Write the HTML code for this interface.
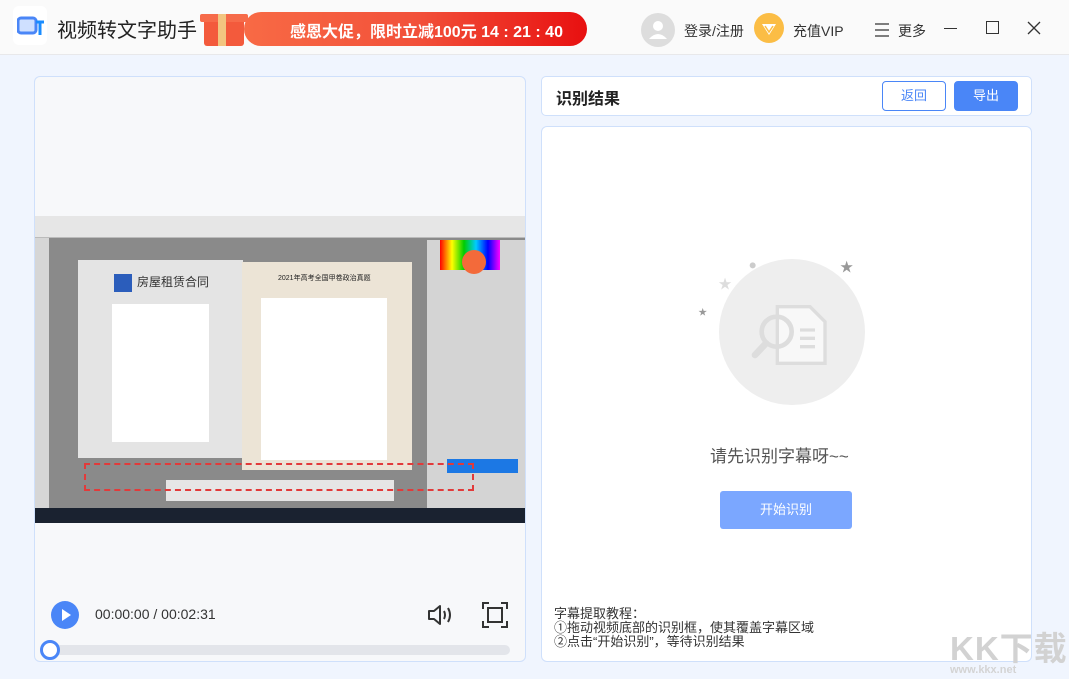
<!DOCTYPE html>
<html><head><meta charset="utf-8"><style>
*{margin:0;padding:0;box-sizing:border-box}
body{width:1069px;height:679px;overflow:hidden;background:#f0f5fe;font-family:"Liberation Sans","Noto Sans CJK SC",sans-serif;position:relative;color:#333}
.a{position:absolute}
</style></head><body>
<!-- top bar -->
<div class="a" style="left:0;top:0;width:1069px;height:55px;background:#fafafa;border-bottom:1px solid #e8e8ea"></div>
<div class="a" style="left:13px;top:6px;width:34px;height:39px;background:#fff;border-radius:6px"></div>
<svg class="a" style="left:17px;top:16px" width="28" height="20" viewBox="0 0 28 20"><rect x="1" y="2" width="18" height="15" rx="3" fill="#cfe0ff" stroke="#4a86f7" stroke-width="3"/><path d="M19 6 L27 6 M23 6 L23 19" stroke="#1a8cff" stroke-width="3"/></svg>
<div class="a" style="left:57px;top:14px;font-size:20px;color:#222">视频转文字助手</div>
<div class="a" style="left:244px;top:12px;width:343px;height:34px;border-radius:17px;background:linear-gradient(90deg,#f86a45,#f2513a 50%,#e81010)"></div>
<div class="a" style="left:204px;top:16px;width:40px;height:30px;background:#f35a3c;border-radius:3px"></div>
<div class="a" style="left:200px;top:14px;width:48px;height:8px;background:#f66b4a;border-radius:2px"></div>
<div class="a" style="left:218px;top:14px;width:8px;height:32px;background:#f2c580"></div>
<div class="a" style="left:290px;top:18px;font-size:16px;font-weight:bold;color:#fff">感恩大促，限时立减100元 14 : 21 : 40</div>
<div class="a" style="left:641px;top:13px;width:34px;height:34px;border-radius:50%;background:#ddd"></div>
<svg class="a" style="left:641px;top:13px" width="34" height="34"><circle cx="17" cy="13" r="5" fill="#fff"/><path d="M8 26 Q17 16 26 26 Z" fill="#fff"/></svg>
<div class="a" style="left:684px;top:21px;font-size:14px">登录/注册</div>
<div class="a" style="left:754px;top:13px;width:30px;height:30px;border-radius:50%;background:#fbbd45"></div>
<svg class="a" style="left:754px;top:13px" width="30" height="30"><path d="M8 11 L22 11 L15 22 Z" fill="#fff"/><path d="M11 13 L15 19 L19 13" fill="none" stroke="#fbbd45" stroke-width="1.5"/></svg>
<div class="a" style="left:793px;top:21px;font-size:14px">充值VIP</div>
<svg class="a" style="left:874px;top:22px" width="16" height="16"><path d="M1 2H15M1 8H15M1 14H15" stroke="#333" stroke-width="1.2"/></svg>
<div class="a" style="left:898px;top:21px;font-size:14px">更多</div>
<div class="a" style="left:944px;top:28px;width:13px;height:1px;background:#333"></div>
<div class="a" style="left:986px;top:21px;width:13px;height:13px;border:1.5px solid #333"></div>
<svg class="a" style="left:1027px;top:21px" width="14" height="14"><path d="M1 1L13 13M13 1L1 13" stroke="#333" stroke-width="1.3"/></svg>
<!-- left panel -->
<div class="a" style="left:34px;top:76px;width:492px;height:586px;background:#f7f8fa;border:1px solid #cfe0fb;border-radius:6px"></div>
<div class="a" style="left:35px;top:216px;width:490px;height:307px;background:#8a8a8a"></div>
<div class="a" style="left:35px;top:216px;width:490px;height:22px;background:#e6e6e6;border-bottom:1px solid #bbb"></div>
<div class="a" style="left:35px;top:238px;width:14px;height:270px;background:#d6d6d6"></div>
<div class="a" style="left:78px;top:260px;width:165px;height:198px;background:#e4e4e4"></div>
<div class="a" style="left:114px;top:274px;width:18px;height:18px;background:#2b5dbb"></div>
<div class="a" style="left:137px;top:273px;font-size:12px;color:#333">房屋租赁合同</div>
<div class="a" style="left:112px;top:304px;width:97px;height:138px;background:#fff"></div>
<div class="a" style="left:242px;top:262px;width:170px;height:208px;background:#ece4d6"></div>
<div class="a" style="left:278px;top:273px;font-size:7px;color:#222">2021年高考全国甲卷政治真题</div>
<div class="a" style="left:261px;top:298px;width:126px;height:162px;background:#fff"></div>
<div class="a" style="left:427px;top:240px;width:98px;height:268px;background:#d4d4d4"></div>
<div class="a" style="left:440px;top:240px;width:60px;height:30px;background:linear-gradient(90deg,#f00,#ff0,#0c0,#0cf,#00f,#f0f)"></div>
<div class="a" style="left:462px;top:250px;width:24px;height:24px;border-radius:50%;background:#f36a3a"></div>
<div class="a" style="left:447px;top:459px;width:71px;height:14px;background:#1c78e4"></div>
<div class="a" style="left:166px;top:480px;width:228px;height:21px;background:#e6e6e6"></div>
<div class="a" style="left:84px;top:463px;width:390px;height:28px;border:2px dashed #e23a3a"></div>
<div class="a" style="left:35px;top:508px;width:490px;height:15px;background:#1a2230"></div>
<div class="a" style="left:51px;top:601px;width:28px;height:28px;border-radius:50%;background:#4a86f7"></div>
<svg class="a" style="left:51px;top:601px" width="28" height="28"><path d="M11 8L20 14L11 20Z" fill="#fff"/></svg>
<div class="a" style="left:95px;top:606px;font-size:14px;color:#333">00:00:00 / 00:02:31</div>
<svg class="a" style="left:426px;top:603px" width="28" height="24" viewBox="0 0 28 24"><path d="M3 8H8L14 3V21L8 16H3Z" fill="none" stroke="#333" stroke-width="2" stroke-linejoin="round"/><path d="M18 8Q20 12 18 16M22 5Q26 12 22 19" fill="none" stroke="#333" stroke-width="2"/></svg>
<svg class="a" style="left:482px;top:602px" width="26" height="26"><path d="M1 7V1H7M19 1H25V7M25 19V25H19M7 25H1V19" fill="none" stroke="#333" stroke-width="2"/><rect x="6" y="6" width="14" height="14" fill="none" stroke="#333" stroke-width="2"/></svg>
<div class="a" style="left:43px;top:645px;width:467px;height:10px;border-radius:5px;background:#e3e5ea"></div>
<div class="a" style="left:40px;top:640px;width:20px;height:20px;border-radius:50%;background:#fff;border:3px solid #4a86f7"></div>
<!-- right -->
<div class="a" style="left:541px;top:76px;width:491px;height:40px;background:#fff;border:1px solid #cfe0fb;border-radius:5px"></div>
<div class="a" style="left:556px;top:85px;font-size:16px;font-weight:bold;color:#222">识别结果</div>
<div class="a" style="left:882px;top:81px;width:64px;height:30px;border:1px solid #4a86f7;border-radius:4px;background:#fff;color:#4a86f7;font-size:13px;text-align:center;line-height:28px">返回</div>
<div class="a" style="left:954px;top:81px;width:64px;height:30px;border-radius:4px;background:#4a86f7;color:#fff;font-size:13px;text-align:center;line-height:30px">导出</div>
<div class="a" style="left:541px;top:126px;width:491px;height:536px;background:#fff;border:1px solid #cfe0fb;border-radius:6px"></div>
<div class="a" style="left:719px;top:259px;width:146px;height:146px;border-radius:50%;background:#eee"></div>
<svg class="a" style="left:690px;top:250px" width="200" height="150" viewBox="0 0 600 450"><path d="M262 170H360L405 215V340H262Z" fill="#f8f8f8" stroke="#ddd" stroke-width="10"/><path d="M330 240H375M330 265H375M330 290H375" stroke="#ddd" stroke-width="10"/><circle cx="260" cy="245" r="45" fill="none" stroke="#ddd" stroke-width="14"/><path d="M228 280L195 315" stroke="#ddd" stroke-width="20" stroke-linecap="round"/><circle cx="188" cy="46" r="9" fill="#ccc"/><text x="450" y="65" font-size="40" fill="#999">★</text><text x="85" y="115" font-size="40" fill="#ddd">★</text><text x="25" y="195" font-size="26" fill="#999">★</text></svg>
<div class="a" style="left:710px;top:442px;font-size:17px;color:#555">请先识别字幕呀~~</div>
<div class="a" style="left:720px;top:491px;width:132px;height:38px;border-radius:3px;background:#7ba7ff;color:#fff;font-size:13px;text-align:center;line-height:38px">开始识别</div>
<div class="a" style="left:554px;top:607px;font-size:13px;line-height:14px;color:#333">字幕提取教程：<br>①拖动视频底部的识别框，使其覆盖字幕区域<br>②点击“开始识别”，等待识别结果</div>
<div class="a" style="left:950px;top:622px;font-size:33px;font-weight:bold;color:#d2d2d2;letter-spacing:1px">KK下载</div>
<div class="a" style="left:950px;top:664px;font-size:11px;font-weight:bold;color:#d4d4d4">www.kkx.net</div>
</body></html>
